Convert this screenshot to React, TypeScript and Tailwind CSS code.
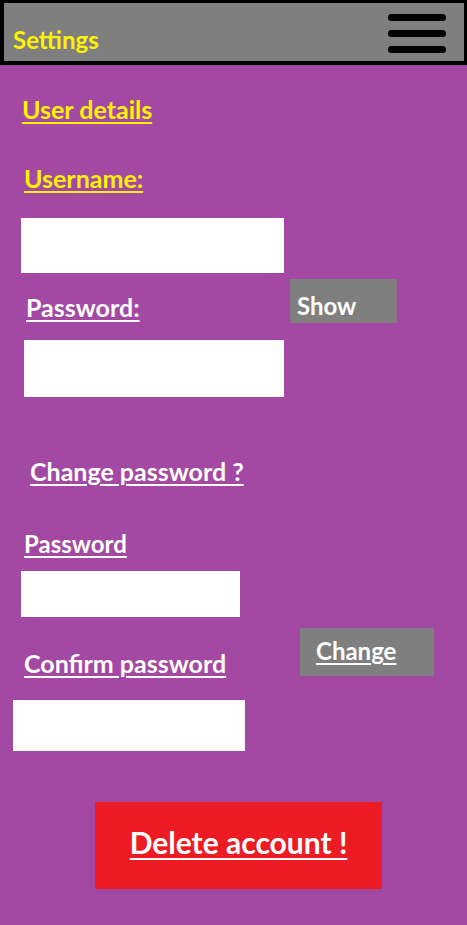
import React from "react";

export default function App() {
  return (
    <div className="w-[467px] min-h-[925px] bg-[#a349a4] font-['Lato',sans-serif] font-bold">
      <header className="h-[65px] bg-[#7f7f7f] border-t-[3px] border-r-[3px] border-b-4 border-l-4 border-black flex justify-between">
        <div className="ml-[9px] mt-[25px] text-[24px] leading-none text-[#fff200]">Settings</div>
        <div className="mt-[11px] mr-[18px] flex flex-col gap-[9px]">
          <div className="h-[7px] w-[58px] rounded-full bg-black" />
          <div className="h-[7px] w-[58px] rounded-full bg-black" />
          <div className="h-[7px] w-[58px] rounded-full bg-black" />
        </div>
      </header>

      <main className="flex flex-col items-start">
        <div className="ml-[22px] mt-[32px] text-[25px] leading-none text-[#fff200] underline decoration-2 underline-offset-[3px]">User details</div>
        <div className="ml-[24px] mt-[44px] text-[25px] leading-none text-[#fff200] underline decoration-2 underline-offset-[3px]">Username:</div>
        <div className="ml-[21px] mt-[27px] h-[55px] w-[263px] bg-white" />

        <div className="mt-[6px] flex items-start">
          <div className="ml-[26px] mt-[16px] w-[264px] text-[25px] leading-none text-white underline decoration-2 underline-offset-[3px]">Password:</div>
          <button className="h-[44px] w-[107px] bg-[#7f7f7f] pl-[7px] pt-[15px] text-left text-[24px] leading-none text-white flex items-start">Show</button>
        </div>

        <div className="ml-[24px] mt-[17px] h-[57px] w-[260px] bg-white" />

        <div className="ml-[30px] mt-[62px] text-[25px] leading-none text-white underline decoration-2 underline-offset-[3px]">Change password ?</div>
        <div className="ml-[24px] mt-[48px] text-[24px] leading-none text-white underline decoration-2 underline-offset-[3px]">Password</div>
        <div className="ml-[21px] mt-[15px] h-[46px] w-[219px] bg-white" />

        <div className="mt-[11px] flex items-start">
          <div className="ml-[24px] mt-[23px] w-[276px] text-[25px] leading-none text-white underline decoration-2 underline-offset-[3px]">Confirm password</div>
          <button className="h-[48px] w-[134px] bg-[#7f7f7f] pl-[16px] pt-[11px] text-[24px] leading-none text-white underline decoration-2 underline-offset-[3px] flex items-start">Change</button>
        </div>

        <div className="ml-[13px] mt-[24px] h-[51px] w-[232px] bg-white" />

        <button className="ml-[95px] mt-[51px] h-[87px] w-[287px] bg-[#ed1c24] pb-[8px] flex items-center justify-center text-[30px] leading-none text-white underline decoration-2 underline-offset-[4px]">Delete account !</button>
      </main>
    </div>
  );
}
